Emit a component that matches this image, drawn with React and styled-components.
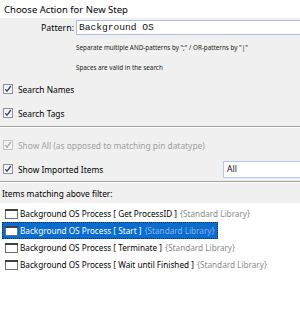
import React from 'react';
import styled, { createGlobalStyle } from 'styled-components';

const GlobalStyle = createGlobalStyle`
  html, body {
    margin: 0;
    padding: 0;
    background: #ffffff;
  }
  body {
    font-family: "Noto Sans", "Open Sans", sans-serif;
    color: #000000;
  }
`;

const Dialog = styled.div`
  width: 300px;
  height: 325px;
  display: flex;
  flex-direction: column;
  overflow: hidden;
  background: #ffffff;
`;

const TitleBar = styled.div`
  height: 18px;
  display: flex;
  align-items: center;
  padding-left: 4px;
  font-size: 9.5px;
  background: #ffffff;
`;

const FilterPanel = styled.div`
  background: #f0f0f0;
  padding-top: 2px;
  display: flex;
  flex-direction: column;
`;

const PatternRow = styled.div`
  display: grid;
  grid-template-columns: 76px 1fr;
  align-items: center;
  height: 15px;
`;

const FieldLabel = styled.label`
  text-align: right;
  padding-right: 2px;
  font-size: 8.8px;
`;

const TextField = styled.div`
  height: 15px;
  box-sizing: border-box;
  border: 1px solid #a9bde6;
  border-right: none;
  background: #ffffff;
  display: flex;
  align-items: center;
  padding-left: ${(p) => (p.$mono ? 2 : 3)}px;
  font-family: ${(p) => (p.$mono ? '"Liberation Mono", "DejaVu Sans Mono", monospace' : 'inherit')};
  font-size: ${(p) => (p.$mono ? 9.6 : 8.6)}px;
  color: #111111;
`;

const HintBlock = styled.div`
  padding-top: 3px;
  display: flex;
  flex-direction: column;
`;

const Hint = styled.div`
  height: 19.5px;
  line-height: 19.5px;
  padding-left: 76px;
  font-size: 6.3px;
  color: #222222;
  white-space: nowrap;
`;

const CheckRow = styled.div`
  height: 24px;
  display: flex;
  align-items: center;
  padding-left: 3px;
  gap: 5px;
  font-size: 8.4px;
  color: ${(p) => (p.$disabled ? '#a0a0a0' : '#000000')};
`;

const Box = styled.span`
  width: 10px;
  height: 10px;
  box-sizing: border-box;
  border: 1px solid ${(p) => (p.$disabled ? '#c4c4c4' : '#8e8f8f')};
  background: ${(p) => (p.$disabled ? '#f4f4f4' : 'linear-gradient(#f0f0f0, #ffffff)')};
  display: flex;
  align-items: center;
  justify-content: center;
  flex-shrink: 0;
`;

const Spacer = styled.div`
  flex: 1;
`;

const SelectBox = styled(TextField)`
  width: 77px;
  height: 17px;
  border-color: #b4c6ea;
`;

const Separator = styled.div`
  height: 0;
  border-top: 1px solid #a0a0a0;
  border-bottom: 1px solid #ffffff;
  margin: ${(p) => p.$margin || '0'};
`;

const ListHeader = styled.div`
  background: #f0f0f0;
  height: 20px;
  padding: 3px 0 0 2px;
  box-sizing: border-box;
  line-height: 16px;
  font-size: 8.4px;
`;

const List = styled.div`
  flex: 1;
  background: #ffffff;
  padding-top: 2px;
  display: flex;
  flex-direction: column;
  align-items: flex-start;
`;

const Item = styled.div`
  height: 17px;
  box-sizing: border-box;
  display: flex;
  align-items: center;
  gap: 2px;
  margin-left: 2px;
  padding: 0 2px;
  font-size: 8.2px;
  white-space: nowrap;
  background: ${(p) => (p.$selected ? '#0a6ccf' : 'transparent')};
  color: ${(p) => (p.$selected ? '#ffffff' : '#000000')};
  border: 1px ${(p) => (p.$selected ? 'dotted #10345c' : 'solid transparent')};
`;

const Library = styled.span`
  color: ${(p) => (p.$selected ? '#8db4e2' : '#8a8a8a')};
  margin-left: 3px;
`;

const Check = ({ disabled }) => (
  <Box $disabled={disabled}>
    <svg width="8" height="8" viewBox="0 0 8 8">
      <path
        d="M1.3 4.2 L3 6.3 L6.8 1"
        fill="none"
        stroke={disabled ? '#a8a8a8' : '#2a3f8c'}
        strokeWidth="1.3"
      />
    </svg>
  </Box>
);

const WindowIcon = () => (
  <svg width="13" height="10" viewBox="0 0 13 10">
    <rect x="0.5" y="0.5" width="12" height="9" fill="#ffffff" stroke="#6e6e6e" />
    <rect x="0" y="0" width="13" height="2" fill="#404040" />
  </svg>
);

const items = [
  'Get ProcessID',
  'Start',
  'Terminate',
  'Wait until Finished',
];

const App = () => {
  return (
    <Dialog>
      <GlobalStyle />
      <TitleBar>Choose Action for New Step</TitleBar>
      <FilterPanel>
        <PatternRow>
          <FieldLabel>Pattern:</FieldLabel>
          <TextField $mono>Background OS</TextField>
        </PatternRow>
        <HintBlock>
          <Hint>Separate multiple AND-patterns by ";" / OR-patterns by "|"</Hint>
          <Hint>Spaces are valid in the search</Hint>
        </HintBlock>
        <CheckRow>
          <Check />
          Search Names
        </CheckRow>
        <CheckRow>
          <Check />
          Search Tags
        </CheckRow>
        <Separator $margin="1px 0 5px" />
        <CheckRow $disabled>
          <Check disabled />
          Show All (as opposed to matching pin datatype)
        </CheckRow>
        <CheckRow>
          <Check />
          Show Imported Items
          <Spacer />
          <SelectBox>All</SelectBox>
        </CheckRow>
        <Separator />
      </FilterPanel>
      <ListHeader>Items matching above filter:</ListHeader>
      <List>
        {items.map((name, i) => (
          <Item key={name} $selected={i === 1}>
            <WindowIcon />
            <span>
              Background OS Process [ {name} ]
              <Library $selected={i === 1}>{'{Standard Library}'}</Library>
            </span>
          </Item>
        ))}
      </List>
    </Dialog>
  );
};

export default App;
